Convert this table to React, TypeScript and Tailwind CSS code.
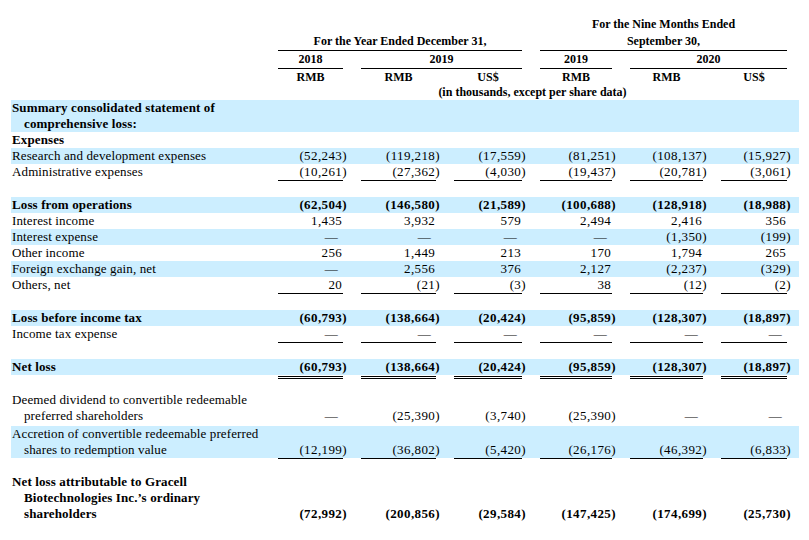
import clsx from "clsx";

type Line = "single" | "double";

type Row = {
  label?: string[];
  vals?: string[];
  bold?: boolean;
  band?: boolean;
  line?: Line;
  gap?: string;
};

const WIDTHS = ["w-[65px]", "w-[75px]", "w-[68px]", "w-[72px]", "w-[73px]", "w-[66px]"];
const D = "—";

const ROWS: Row[] = [
  { label: ["Summary consolidated statement of", "comprehensive loss:"], bold: true, band: true },
  { label: ["Expenses"], bold: true },
  {
    label: ["Research and development expenses"],
    band: true,
    vals: ["(52,243)", "(119,218)", "(17,559)", "(81,251)", "(108,137)", "(15,927)"],
  },
  {
    label: ["Administrative expenses"],
    vals: ["(10,261)", "(27,362)", "(4,030)", "(19,437)", "(20,781)", "(3,061)"],
    line: "single",
  },
  { gap: "h-[17px]" },
  {
    label: ["Loss from operations"],
    bold: true,
    band: true,
    vals: ["(62,504)", "(146,580)", "(21,589)", "(100,688)", "(128,918)", "(18,988)"],
  },
  { label: ["Interest income"], vals: ["1,435", "3,932", "579", "2,494", "2,416", "356"] },
  { label: ["Interest expense"], band: true, vals: [D, D, D, D, "(1,350)", "(199)"] },
  { label: ["Other income"], vals: ["256", "1,449", "213", "170", "1,794", "265"] },
  { label: ["Foreign exchange gain, net"], band: true, vals: [D, "2,556", "376", "2,127", "(2,237)", "(329)"] },
  { label: ["Others, net"], vals: ["20", "(21)", "(3)", "38", "(12)", "(2)"], line: "single" },
  { gap: "h-[17px]" },
  {
    label: ["Loss before income tax"],
    bold: true,
    band: true,
    vals: ["(60,793)", "(138,664)", "(20,424)", "(95,859)", "(128,307)", "(18,897)"],
  },
  { label: ["Income tax expense"], vals: [D, D, D, D, D, D], line: "single" },
  { gap: "h-[17px]" },
  {
    label: ["Net loss"],
    bold: true,
    band: true,
    vals: ["(60,793)", "(138,664)", "(20,424)", "(95,859)", "(128,307)", "(18,897)"],
    line: "double",
  },
  { gap: "h-[17px]" },
  {
    label: ["Deemed dividend to convertible redeemable", "preferred shareholders"],
    vals: [D, "(25,390)", "(3,740)", "(25,390)", D, D],
  },
  { gap: "h-[2px]" },
  {
    label: ["Accretion of convertible redeemable preferred", "shares to redemption value"],
    band: true,
    vals: ["(12,199)", "(36,802)", "(5,420)", "(26,176)", "(46,392)", "(6,833)"],
    line: "single",
  },
  { gap: "h-[16px]" },
  {
    label: ["Net loss attributable to Gracell", "Biotechnologies Inc.’s ordinary", "shareholders"],
    bold: true,
    vals: ["(72,992)", "(200,856)", "(29,584)", "(147,425)", "(174,699)", "(25,730)"],
  },
];

function Value({ v, width, line }: { v: string; width: string; line?: Line }) {
  const neg = v.startsWith("(");
  const dash = v === D;
  return (
    <div
      className={clsx(
        width,
        "relative flex justify-end",
        line === "single" && "after:absolute after:inset-x-0 after:top-full after:h-px after:bg-black",
        line === "double" &&
          "after:absolute after:inset-x-0 after:top-[calc(100%+1px)] after:h-[3px] after:border-y after:border-black",
      )}
    >
      <span className="-mr-[4px] whitespace-nowrap tracking-[0.4px]">
        {neg ? (
          v
        ) : (
          <>
            {v}
            <span className={clsx("invisible", dash && "pl-[4px]")}>)</span>
          </>
        )}
      </span>
    </div>
  );
}

function BodyRow({ row }: { row: Row }) {
  if (row.gap) return <div className={row.gap} />;
  const lines = row.label ?? [];
  return (
    <div
      className={clsx(
        "flex w-[788px] items-end leading-[16px]",
        row.band && "bg-[#cceeff]",
        row.bold && "font-bold",
      )}
    >
      <div className="w-[267px] pl-px tracking-[0.12px]">
        {lines.map((text, i) => (
          <div key={i} className={clsx("h-[16px] whitespace-nowrap", i > 0 && "pl-[12px]")}>
            {text}
          </div>
        ))}
      </div>
      {row.vals && (
        <div className="flex h-[16px] gap-[18px]">
          {row.vals.map((v, i) => (
            <Value key={i} v={v} width={WIDTHS[i]} line={row.line} />
          ))}
        </div>
      )}
    </div>
  );
}

function Header() {
  return (
    <div className="flex flex-col text-[12px] font-bold leading-[16px]">
      <div className="flex h-[17px]">
        <div className="w-[267px]" />
        <div className="w-[244px]" />
        <div className="w-[18px]" />
        <div className="w-[247px] text-center">For the Nine Months Ended</div>
      </div>
      <div className="flex h-[18px]">
        <div className="w-[267px]" />
        <div className="w-[244px] border-b border-black text-center">For the Year Ended December 31,</div>
        <div className="w-[18px]" />
        <div className="w-[247px] border-b border-black text-center">September 30,</div>
      </div>
      <div className="flex h-[18px] items-center">
        <div className="w-[267px]" />
        <div className="flex h-full gap-[18px]">
          <div className="w-[65px] border-b border-black text-center">2018</div>
          <div className="w-[161px] border-b border-black text-center">2019</div>
          <div className="w-[72px] border-b border-black text-center">2019</div>
          <div className="w-[157px] border-b border-black text-center">2020</div>
        </div>
      </div>
      <div className="flex h-[15px] items-center">
        <div className="w-[267px]" />
        <div className="flex gap-[18px]">
          {["RMB", "RMB", "US$", "RMB", "RMB", "US$"].map((t, i) => (
            <div key={i} className={clsx(WIDTHS[i], "text-center")}>
              {t}
            </div>
          ))}
        </div>
      </div>
      <div className="flex h-[16px]">
        <div className="w-[267px]" />
        <div className="w-[509px] text-center">(in thousands, except per share data)</div>
      </div>
    </div>
  );
}

export default function App() {
  return (
    <div
      className="h-[540px] w-[809px] overflow-hidden bg-white pl-[11px] pt-[16px] text-[13px] text-black"
      style={{ fontFamily: '"Liberation Serif", "Times New Roman", serif' }}
    >
      <Header />
      {ROWS.map((row, i) => (
        <BodyRow key={i} row={row} />
      ))}
    </div>
  );
}
